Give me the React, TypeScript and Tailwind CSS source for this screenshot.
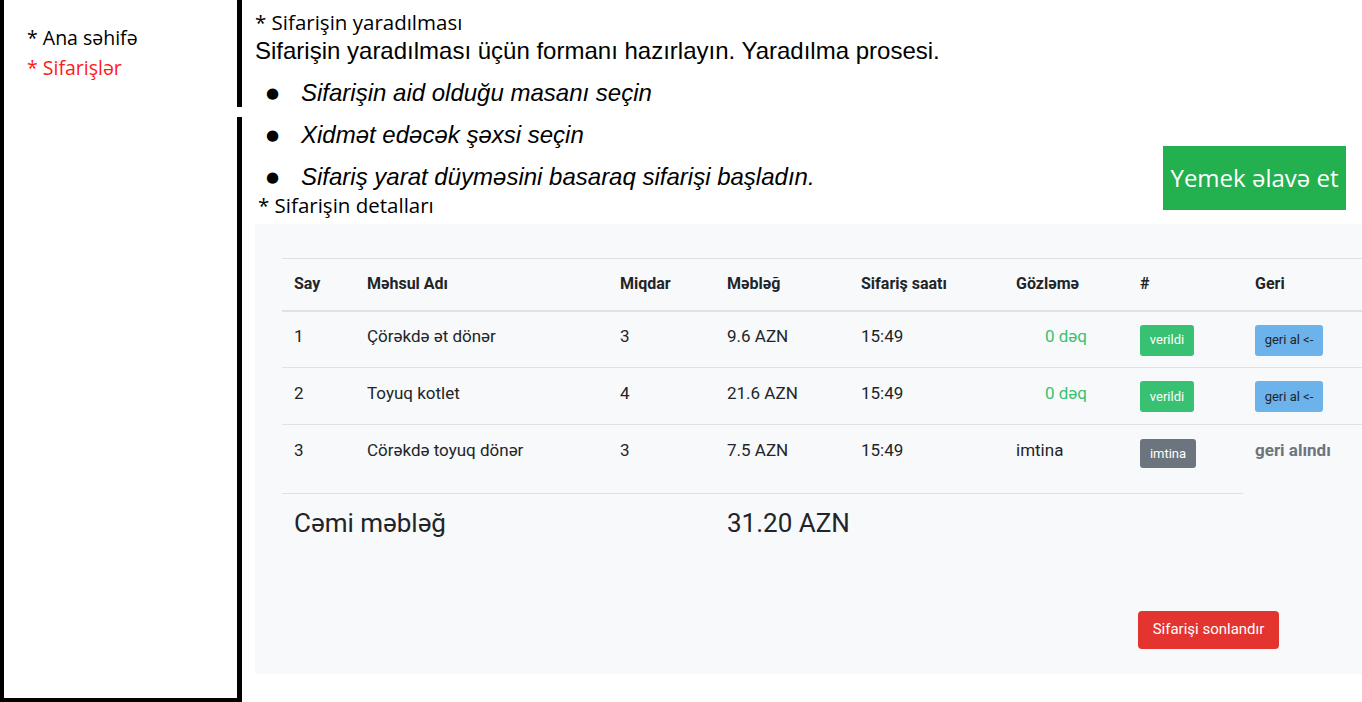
import React from 'react';

type Row = {
  no: string;
  name: string;
  qty: string;
  amount: string;
  time: string;
  wait: string;
  status: 'verildi' | 'imtina';
  back: 'button' | 'done';
};

const rows: Row[] = [
  { no: '1', name: 'Çörəkdə ət dönər', qty: '3', amount: '9.6 AZN', time: '15:49', wait: '0 dəq', status: 'verildi', back: 'button' },
  { no: '2', name: 'Toyuq kotlet', qty: '4', amount: '21.6 AZN', time: '15:49', wait: '0 dəq', status: 'verildi', back: 'button' },
  { no: '3', name: 'Cörəkdə toyuq dönər', qty: '3', amount: '7.5 AZN', time: '15:49', wait: 'imtina', status: 'imtina', back: 'done' },
];

const steps = [
  'Sifarişin aid olduğu masanı seçin',
  'Xidmət edəcək şəxsi seçin',
  'Sifariş yarat düyməsini basaraq sifarişi başladın.',
];

const Sidebar: React.FC = () => (
  <aside className="flex w-[242px] shrink-0 border-l-4 border-b-4 border-black bg-white">
    <nav className="flex-1 pl-[23px] pt-[23px] font-['Open_Sans',sans-serif] text-[19.5px] leading-[30px]">
      <div className="text-black">* Ana səhifə</div>
      <div className="text-[#ff1a1a]">* Sifarişlər</div>
    </nav>
    <div className="flex w-[5px] flex-col">
      <div className="h-[107px] bg-black"></div>
      <div className="mt-[10px] flex-1 bg-black"></div>
    </div>
  </aside>
);

// plain text cell, sits a little above the badge centre like the baseline alignment
const Cell: React.FC<{ children: React.ReactNode; className?: string }> = ({ children, className = '' }) => (
  <td className="px-3 pt-[13px] align-top">
    <div className={`flex h-[31px] items-center pb-[6px] ${className}`}>{children}</div>
  </td>
);

const OrderTable: React.FC = () => (
  <div className="h-[450px] overflow-hidden bg-[#f8f9fa] pl-[27px] pt-[34px] font-['Roboto',sans-serif] text-[#212529]">
    <table className="w-[1095px] table-fixed border-collapse text-left">
      <colgroup>
        <col className="w-[73px]" />
        <col className="w-[253px]" />
        <col className="w-[107px]" />
        <col className="w-[134px]" />
        <col className="w-[155px]" />
        <col className="w-[124px]" />
        <col className="w-[115px]" />
        <col className="w-[134px]" />
      </colgroup>
      <thead>
        <tr className="h-[52px] border-t border-b-2 border-[#dee2e6] text-[16px] font-bold">
          <th className="px-3 align-middle">Say</th>
          <th className="px-3 align-middle">Məhsul Adı</th>
          <th className="px-3 align-middle">Miqdar</th>
          <th className="px-3 align-middle">Məbləğ</th>
          <th className="px-3 align-middle">Sifariş saatı</th>
          <th className="px-3 align-middle">Gözləmə</th>
          <th className="px-3 align-middle">#</th>
          <th className="px-3 align-middle">Geri</th>
        </tr>
      </thead>
      <tbody className="text-[17px]">
        {rows.map((r, i) => (
          <tr key={r.no} className={`${i === rows.length - 1 ? 'h-[69px]' : 'h-[57px] border-b border-[#dee2e6]'}`}>
            <Cell>{r.no}</Cell>
            <Cell>{r.name}</Cell>
            <Cell>{r.qty}</Cell>
            <Cell>{r.amount}</Cell>
            <Cell>{r.time}</Cell>
            {r.wait === 'imtina' ? (
              <Cell>imtina</Cell>
            ) : (
              <Cell className="pl-[29px] text-[#38c172]">{r.wait}</Cell>
            )}
            <td className="px-3 pt-[13px] align-top">
              {r.status === 'verildi' ? (
                <span className="inline-flex h-[31px] w-[54px] items-center justify-center rounded-[3px] bg-[#38c172] text-[13px] text-white">verildi</span>
              ) : (
                <span className="mt-[1px] inline-flex h-[29px] w-[56px] items-center justify-center rounded-[3px] bg-[#6c757d] text-[13px] text-white">imtina</span>
              )}
            </td>
            <td className="px-3 pt-[13px] align-top">
              {r.back === 'button' ? (
                <span className="inline-flex h-[31px] w-[68px] items-center justify-center rounded-[3px] bg-[#6cb2eb] text-[13px] text-[#212529]">geri al &lt;-</span>
              ) : (
                <div className="flex h-[31px] items-center pb-[6px] text-[17px] font-bold text-[#6c757d]">geri alındı</div>
              )}
            </td>
          </tr>
        ))}
      </tbody>
      <tfoot>
        <tr className="h-[60px] text-[26px]">
          <td colSpan={3} className="border-t border-[#dee2e6] px-3 align-middle">Cəmi məbləğ</td>
          <td colSpan={4} className="border-t border-[#dee2e6] px-3 align-middle">31.20 AZN</td>
          <td></td>
        </tr>
      </tfoot>
    </table>
    <div className="mt-[57px] flex justify-end pr-[83px]">
      <button className="h-[38px] w-[141px] rounded-[4px] bg-[#e3342f] text-[15px] text-white">Sifarişi sonlandır</button>
    </div>
  </div>
);

const App: React.FC = () => {
  return (
    <div className="flex h-[702px] w-[1362px] overflow-hidden bg-white">
      <Sidebar />
      <main className="min-w-0 flex-1 overflow-hidden pl-[13px]">
        <div className="flex h-[224px]">
          <div className="min-w-0 flex-1">
            <div className="pt-[9px] font-['Open_Sans',sans-serif] text-[20.5px] leading-[26px] text-black">* Sifarişin yaradılması</div>
            <p className="mt-[2px] whitespace-nowrap font-['Liberation_Sans',sans-serif] text-[24px] leading-[28px] text-black">
              Sifarişin yaradılması üçün formanı hazırlayın. Yaradılma prosesi.
            </p>
            <ul className="mt-[7px] font-['Liberation_Sans',sans-serif] text-[24px] italic text-black">
              {steps.map(s => (
                <li key={s} className="flex h-[42px] items-center whitespace-nowrap">
                  <span className="w-[46px] pl-[11px] font-['DejaVu_Sans',sans-serif] text-[15px] not-italic">●</span>
                  <span>{s}</span>
                </li>
              ))}
            </ul>
            <div className="-mt-[6px] pl-[3px] font-['Open_Sans',sans-serif] text-[20.5px] leading-[26px] text-black">* Sifarişin detalları</div>
          </div>
          <div className="shrink-0 pr-[16px] pt-[146px]">
            <button className="flex h-[64px] w-[183px] items-center justify-center bg-[#23b04e] font-['Open_Sans',sans-serif] text-[24px] text-white">
              Yemek əlavə et
            </button>
          </div>
        </div>
        <OrderTable />
      </main>
    </div>
  );
};

export default App;
